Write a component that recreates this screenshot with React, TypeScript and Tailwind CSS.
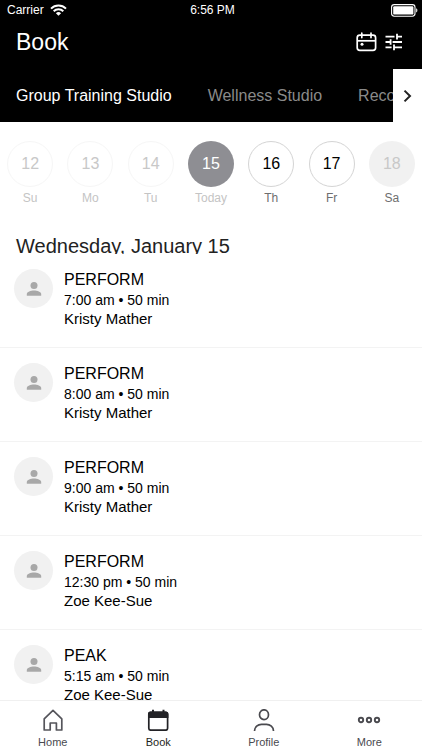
const days = [
  { num: 12, label: "Su", circle: "border border-[#f6f6f6] text-[#c8c8c8]", text: "text-[#c4c4c4]" },
  { num: 13, label: "Mo", circle: "border border-[#f6f6f6] text-[#c8c8c8]", text: "text-[#c4c4c4]" },
  { num: 14, label: "Tu", circle: "border border-[#f6f6f6] text-[#c8c8c8]", text: "text-[#c4c4c4]" },
  { num: 15, label: "Today", circle: "bg-[#8e8e93] text-white", text: "text-[#c4c4c4]" },
  { num: 16, label: "Th", circle: "border border-[#d4d4d4] text-black", text: "text-[#6e6e6e]" },
  { num: 17, label: "Fr", circle: "border border-[#d4d4d4] text-black", text: "text-[#6e6e6e]" },
  { num: 18, label: "Sa", circle: "bg-[#f1f1f1] text-[#c8c8c8]", text: "text-[#6e6e6e]" },
];

const classes = [
  { name: "PERFORM", time: "7:00 am • 50 min", coach: "Kristy Mather" },
  { name: "PERFORM", time: "8:00 am • 50 min", coach: "Kristy Mather" },
  { name: "PERFORM", time: "9:00 am • 50 min", coach: "Kristy Mather" },
  { name: "PERFORM", time: "12:30 pm • 50 min", coach: "Zoe Kee-Sue" },
  { name: "PEAK", time: "5:15 am • 50 min", coach: "Zoe Kee-Sue" },
];

function StatusBar() {
  return (
    <div className="grid h-5 grid-cols-3 items-center pl-[7px] pr-1 text-xs">
      <div className="flex items-center gap-[6px]">
        <span>Carrier</span>
        <svg width="17" height="12" viewBox="0 0 17 12" fill="none" stroke="white" strokeWidth="2">
          <path d="M1 4.6a10.6 10.6 0 0 1 15 0" />
          <path d="M3.7 7.3a6.8 6.8 0 0 1 9.6 0" />
          <path d="M8.5 11.8 5.9 9.2a3.7 3.7 0 0 1 5.2 0z" fill="white" stroke="none" />
        </svg>
      </div>
      <span className="text-center">6:56 PM</span>
      <svg className="justify-self-end" width="27" height="13" viewBox="0 0 27 13" fill="none">
        <rect x="0.6" y="0.6" width="23.4" height="11.6" rx="2.6" stroke="white" strokeWidth="1.1" />
        <rect x="2.2" y="2.2" width="20.2" height="8.4" rx="1.2" fill="white" />
        <path d="M25.2 4.3c1.6.6 1.6 3.6 0 4.2z" fill="white" />
      </svg>
    </div>
  );
}

function Header() {
  return (
    <header className="bg-black text-white">
      <StatusBar />
      <div className="flex h-[49px] items-start justify-between pl-4 pr-[19px] pt-2">
        <h1 className="text-[23px] leading-7">Book</h1>
        <div className="flex h-7 items-center gap-2">
          <button type="button" aria-label="Calendar">
            <svg width="21" height="20" viewBox="0 0 21 20" fill="none" stroke="white" strokeWidth="1.7">
              <rect x="1.2" y="3.2" width="18.4" height="15.2" rx="2.6" />
              <path d="M1.2 8.800h18.400" />
              <path d="M5.800 1.200v4.400M15 1.200v4.400" strokeLinecap="round" />
              <circle cx="6" cy="12.200" r="1.500" fill="white" stroke="none" />
            </svg>
          </button>
          <button type="button" aria-label="Filter">
            <svg width="18" height="18" viewBox="0 0 18 18" fill="none" stroke="white" strokeWidth="1.8">
              <path d="M0.500 3.600h9M12 3.600h5M12 0.800v5.600" />
              <path d="M0.500 9h4.500M7.600 9H17M5.600 6.200v5.600" />
              <path d="M0.500 14.400h6.100M9 14.400h8M9 11.600v5.600" />
            </svg>
          </button>
        </div>
      </div>
      <nav className="flex h-[53px]">
        <div className="flex min-w-0 flex-1 items-center gap-9 overflow-hidden whitespace-nowrap pl-4">
          <a href="#group">Group Training Studio</a>
          <a href="#wellness" className="text-[#8a8a8a]">Wellness Studio</a>
          <a href="#recovery" className="text-[#8a8a8a]">Reco</a>
        </div>
        <button type="button" aria-label="Next" className="flex w-[29px] shrink-0 items-center justify-center bg-white">
          <svg width="9" height="14" viewBox="0 0 9 14" fill="none" stroke="#222" strokeWidth="2">
            <path d="M1.5 1.6 7 7l-5.500 5.400" />
          </svg>
        </button>
      </nav>
    </header>
  );
}

function ClassRow({ name, time, coach }: { name: string; time: string; coach: string }) {
  return (
    <li className="flex h-[94px] shrink-0 items-start gap-[11px] border-b border-[#f3f3f3] pl-[14px] pt-[15px]">
      <div className="flex size-[39px] items-center justify-center rounded-full bg-[#f1f1f1]">
        <svg width="16" height="16" viewBox="0 0 16 16" fill="#a8a8a8">
          <circle cx="8" cy="4.400" r="3.500" />
          <path d="M0.800 14.800v-1.800C0.800 10.600 4.800 9.400 8 9.400s7.200 1.200 7.200 3.600v1.800z" />
        </svg>
      </div>
      <div className="pt-px text-black">
        <h3 className="text-base leading-5">{name}</h3>
        <p className="text-sm leading-5">{time}</p>
        <p className="text-[15px] leading-[18px]">{coach}</p>
      </div>
    </li>
  );
}

function BottomNav() {
  return (
    <nav className="grid shrink-0 grid-cols-4 border-t border-[#f0f0f0] bg-white pt-2 pb-px text-[11px] leading-[14px] text-[#4a4a4f]">
      <a href="#home" className="flex flex-col items-center gap-1">
        <svg width="22" height="22" viewBox="0 0 22 22" fill="none" stroke="#55555b" strokeWidth="1.700" strokeLinejoin="round">
          <path d="M2.200 21V9.900L11 1.400l8.800 8.500V21h-5.400v-7H8.200v7z" />
        </svg>
        Home
      </a>
      <a href="#book" className="flex flex-col items-center gap-1 text-[#1f1f23]">
        <svg width="22" height="22" viewBox="0 0 22 22" fill="none">
          <rect x="1.800" y="3.400" width="18.800" height="17.800" rx="2" stroke="#222226" strokeWidth="1.700" />
          <path d="M1 9V5a2.500 2.500 0 0 1 2.500-2.500H5V0.800h2v1.700h8.500V0.800h2v1.700h1.500A2.500 2.500 0 0 1 21.400 5v4z" fill="#222226" />
        </svg>
        Book
      </a>
      <a href="#profile" className="flex flex-col items-center gap-1">
        <svg width="22" height="22" viewBox="0 0 22 22" fill="none" stroke="#4a4a4f" strokeWidth="1.700">
          <ellipse cx="11" cy="5.700" rx="4.500" ry="4.900" />
          <path d="M1.500 22c0-4 3.400-6.600 7-6.600h5c3.600 0 7 2.600 7 6.600" />
        </svg>
        Profile
      </a>
      <a href="#more" className="flex flex-col items-center gap-1">
        <svg width="24" height="22" viewBox="0 0 24 22" fill="none" stroke="#4a4a4f" strokeWidth="1.900">
          <circle cx="4" cy="11" r="2.200" />
          <circle cx="12" cy="11" r="2.200" />
          <circle cx="20" cy="11" r="2.200" />
        </svg>
        More
      </a>
    </nav>
  );
}

export default function App() {
  return (
    <div className="flex h-dvh flex-col bg-white font-['Liberation_Sans',Arial,sans-serif]">
      <Header />
      <main className="flex min-h-0 flex-1 flex-col overflow-hidden">
        <div className="grid shrink-0 grid-cols-7 pt-[19px]">
          {days.map((day) => (
            <button key={day.num} type="button" className="flex flex-col items-center gap-[3px]">
              <span className={`flex size-[46px] items-center justify-center rounded-full ${day.circle}`}>
                {day.num}
              </span>
              <span className={`text-xs leading-4 ${day.text}`}>{day.label}</span>
            </button>
          ))}
        </div>
        {/* the box is shorter than the glyphs, so the descenders are cut */}
        <h2 className="mt-8 h-4 shrink-0 overflow-hidden pl-4 text-xl leading-4 text-[#222]">
          Wednesday, January 15
        </h2>
        <ul className="flex flex-col">
          {classes.map((item, i) => (
            <ClassRow key={i} {...item} />
          ))}
        </ul>
      </main>
      <BottomNav />
    </div>
  );
}
